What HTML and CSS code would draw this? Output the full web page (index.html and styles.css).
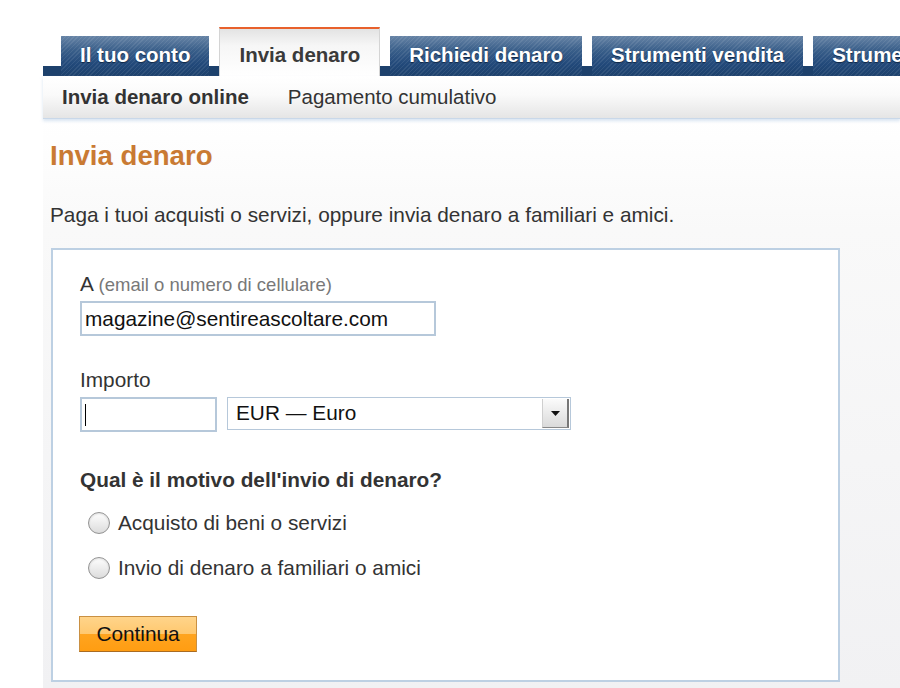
FILE: index.html
```html
<!DOCTYPE html>
<html>
<head>
    <meta charset="utf-8">
    <link rel="stylesheet" href="styles.css">
</head>
<body>
    <div class="page">
        <nav class="tabs">
            <a class="tab">Il tuo conto</a>
            <a class="tab active">Invia denaro</a>
            <a class="tab">Richiedi denaro</a>
            <a class="tab">Strumenti vendita</a>
            <a class="tab">Strumenti acquisto</a>
        </nav>
        <div class="subnav">
            <a class="current">Invia denaro online</a>
            <a>Pagamento cumulativo</a>
        </div>

        <main class="content">
            <h1>Invia denaro</h1>
            <p class="intro">Paga i tuoi acquisti o servizi, oppure invia denaro a familiari e amici.</p>

            <form class="send-box">
                <label class="field-label" for="to">A <span class="hint">(email o numero di cellulare)</span></label>
                <input class="text-input email" id="to" type="text" value="magazine@sentireascoltare.com">

                <label class="field-label amount-label" for="amount">Importo</label>
                <div class="amount-row">
                    <div class="amount-field">
                        <span class="caret"></span>
                        <input id="amount" type="text">
                    </div>
                    <div class="currency">
                        <select>
                            <option>EUR — Euro</option>
                            <option>USD — Dollaro USA</option>
                            <option>GBP — Sterlina britannica</option>
                        </select>
                        <span class="arrow">
                            <svg width="9" height="5" viewBox="0 0 9 5"><path d="M0 0h9L4.5 5z" fill="#111"/></svg>
                        </span>
                    </div>
                </div>

                <h3 class="question">Qual è il motivo dell'invio di denaro?</h3>
                <label class="radio-row"><input type="radio" name="motivo"> Acquisto di beni o servizi</label>
                <label class="radio-row second"><input type="radio" name="motivo"> Invio di denaro a familiari o amici</label>

                <button type="button" class="continue">Continua</button>
            </form>
        </main>
    </div>
</body>
</html>
```
FILE: styles.css
```css
body {
    margin: 0;
    background-color: #fff;
    font-family: "Liberation Sans", Arial, sans-serif;
    font-size: 20.8px;
    line-height: 24px;
    color: #333;
    overflow: hidden;
}

.page {
    margin-left: 43px;
    padding-top: 27px;
}

/* tab bar */
.tabs {
    display: flex;
    align-items: flex-end;
    gap: 10px;
    height: 49px;
    padding-left: 18px;
    overflow: hidden;
    white-space: nowrap;
    font-size: 20.5px;
    background: linear-gradient(to bottom, transparent 39px, #1d416c 39px);
}

.tab {
    flex-shrink: 0;
    box-sizing: border-box;
    height: 40px;
    padding: 7px 19px 9px;
    font-weight: bold;
    color: #fff;
    text-shadow: 0 1px 1px #0e2645;
    background:
        repeating-linear-gradient(135deg, rgba(255, 255, 255, 0.08) 0 1px, transparent 1px 3px),
        linear-gradient(#6784a6, #3a5f8a 35%, #22497a 70%, #1d416c);
}

.tab.active {
    height: 49px;
    padding-top: 14px;
    border-top: 2px solid #e8612c;
    border-left: 1px solid #d4d4d4;
    border-right: 1px solid #d4d4d4;
    color: #3a3a3a;
    text-shadow: none;
    background: linear-gradient(#e3e3e3, #f6f6f6 35%, #fff);
}

/* sub navigation */
.subnav {
    position: relative;
    z-index: 1;
    display: flex;
    gap: 39px;
    padding: 9px 19px 9px;
    font-size: 20.5px;
    background: linear-gradient(#fff, #fafafa 45%, #e5e5e5);
    border-bottom: 1px solid #c9d8e9;
    box-shadow: 0 2px 3px rgba(190, 210, 232, 0.6);
}

.subnav .current {
    font-weight: bold;
}

/* main content */
.content {
    padding: 21px 0 8px 7px;
    background: linear-gradient(#fff, #f9f9f9 110px, #f1f1f3);
}

h1 {
    margin: 0;
    font-size: 27.6px;
    line-height: 32px;
    color: #c97a33;
}

.intro {
    margin: 31px 0 0;
}

.send-box {
    box-sizing: border-box;
    width: 789px;
    margin: 21px 0 0 1px;
    padding: 22px 27px 28px;
    background-color: #fff;
    border: 2px solid #bdd0e3;
}

.field-label {
    display: block;
    margin-bottom: 4px;
}

.hint {
    font-size: 18.5px;
    color: #787878;
}

.text-input {
    display: block;
    box-sizing: border-box;
    height: 35px;
    padding: 0 3px;
    border: 2px solid #b6c8da;
    font: inherit;
    color: #111;
    outline: none;
}

.email {
    width: 356px;
}

.amount-label {
    margin-top: 32px;
    margin-bottom: 5px;
}

.amount-row {
    display: flex;
    align-items: flex-start;
    gap: 10px;
}

.amount-field {
    box-sizing: border-box;
    display: flex;
    align-items: center;
    width: 137px;
    height: 35px;
    padding-left: 3px;
    background-color: #fff;
    border: 2px solid #b6c8da;
}

.caret {
    width: 1px;
    height: 22px;
    background-color: #000;
}

.amount-field input {
    flex: 1;
    min-width: 0;
    border: none;
    outline: none;
    font: inherit;
    background: transparent;
}

.currency {
    box-sizing: border-box;
    display: flex;
    width: 344px;
    height: 33px;
    background-color: #fff;
    border: 1px solid #b6c8da;
}

.currency select {
    flex: 1;
    appearance: none;
    -webkit-appearance: none;
    border: none;
    outline: none;
    padding: 0 0 2px 8px;
    font: inherit;
    color: #111;
    background: transparent;
}

.arrow {
    display: flex;
    align-items: center;
    justify-content: center;
    width: 24px;
    margin: 1px 1px 1px 0;
    background: linear-gradient(#fbfbfb, #dadada);
    border-left: 1px solid #cfcfcf;
    border-right: 2px solid #777;
    border-bottom: 1px solid #888;
}

.question {
    margin: 36px 0 0;
    font-size: 20.8px;
    line-height: 24px;
}

.radio-row {
    display: flex;
    align-items: center;
    gap: 8px;
    margin-top: 19px;
    padding-left: 8px;
}

.radio-row.second {
    margin-top: 21px;
}

.radio-row input {
    appearance: none;
    -webkit-appearance: none;
    width: 22px;
    height: 22px;
    margin: 0;
    border-radius: 50%;
    border: 1px solid #939393;
    background: linear-gradient(#fefefe, #dcdcdc);
    box-shadow: inset 0 1px 2px rgba(0, 0, 0, 0.12);
}

.continue {
    display: block;
    width: 118px;
    height: 36px;
    margin-top: 36px;
    margin-left: -1px;
    padding: 0;
    font: inherit;
    color: #111;
    border: 1px solid #c99043;
    border-bottom-color: #a96b22;
    background: linear-gradient(#ffd48a, #ffc86f 50%, #ffa41f 50%, #ff9d12);
    cursor: pointer;
}
```
